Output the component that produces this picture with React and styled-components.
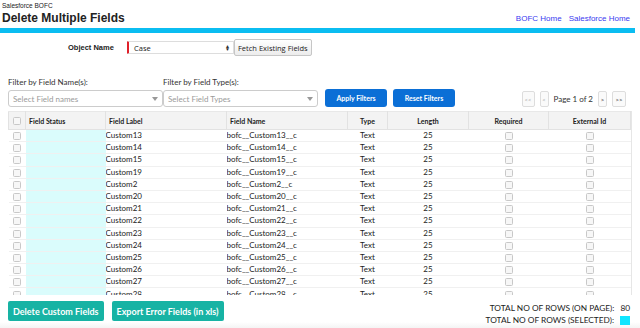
import React from 'react'
import styled, { createGlobalStyle } from 'styled-components'

const Global = createGlobalStyle`
  body {
    margin: 0;
    background: #fff;
    font-family: Lato, "Open Sans", sans-serif;
    color: #222;
  }
`

const Page = styled.div`
  width: 640px;
  height: 328px;
  overflow: hidden;
  background: linear-gradient(to bottom, #fff 0, #fff 322px, #f4f4f4 328px);
`

const Top = styled.div`
  padding: 2px 10px 0 2px;
  font-family: "Liberation Sans", Arial, sans-serif;
`

const Org = styled.div`
  font-size: 6.5px;
  height: 8px;
`

const TitleRow = styled.div`
  display: flex;
  justify-content: space-between;
  align-items: center;
  height: 16px;
`

const Title = styled.h1`
  margin: 0;
  font-size: 12px;
  font-weight: bold;
`

const Links = styled.div`
  display: flex;
  gap: 7px;
  font-size: 8px;
  a { color: #3a3af0; text-decoration: none; }
`

const Bar = styled.div`
  height: 5px;
  width: 635px;
  margin-top: 2px;
  background: #0bbdf1;
`

const ObjectRow = styled.div`
  display: flex;
  align-items: center;
  margin: 6px 0 0 68px;
  height: 17px;
`

const ObjLabel = styled.span`
  font-family: "Liberation Sans", Arial, sans-serif;
  font-size: 7.5px;
  font-weight: bold;
  width: 59px;
`

const NativeSelect = styled.div`
  width: 107px;
  height: 13px;
  border: 1px solid #ddd;
  border-left: 2px solid #e0202a;
  display: flex;
  align-items: center;
  justify-content: space-between;
  padding: 0 3px 0 5px;
  box-sizing: border-box;
  font-size: 7.5px;
  font-family: "Open Sans", sans-serif;
  border-radius: 1px;
`

const Arrows = styled.span`
  font-size: 5px;
  line-height: 3px;
  display: flex;
  flex-direction: column;
  color: #333;
`

const GreyButton = styled.button`
  height: 17px;
  padding: 0 3px;
  font-size: 7.5px;
  font-family: "Open Sans", sans-serif;
  border: 1px solid #c6c6c6;
  border-radius: 2px;
  background: linear-gradient(#fff, #ececec);
  color: #222;
`

const FilterRow = styled.div`
  display: flex;
  align-items: flex-end;
  margin: 22px 0 0 8px;
  height: 29px;
`

const FilterField = styled.div`
  display: flex;
  flex-direction: column;
  width: 155px;
`

const FilterLabel = styled.label`
  font-size: 8px;
  color: #333;
  margin-bottom: 3px;
`

const FilterSelect = styled.div`
  height: 17px;
  border: 1px solid #ccc;
  border-radius: 3px;
  box-sizing: border-box;
  display: flex;
  align-items: center;
  justify-content: space-between;
  padding: 0 4px;
  color: #9a9a9a;
  font-size: 8px;
  &::after {
    content: "";
    border-left: 3.5px solid transparent;
    border-right: 3.5px solid transparent;
    border-top: 4px solid #999;
  }
`

const BlueButton = styled.button`
  height: 18px;
  width: 62px;
  margin-left: ${p => p.$gap}px;
  border: none;
  border-radius: 3px;
  background: #0b6fd6;
  color: #fff;
  font-family: Lato, sans-serif;
  font-weight: bold;
  font-size: 7px;
`

const Pager = styled.div`
  margin-left: auto;
  margin-right: 14px;
  display: flex;
  align-items: center;
  gap: 5px;
  font-size: 8px;
  color: #333;
`

const PageBtn = styled.span`
  height: 16px;
  width: ${p => p.$w}px;
  border: 1px solid #ddd;
  border-radius: 2px;
  box-sizing: border-box;
  display: flex;
  align-items: center;
  justify-content: center;
  font-size: 6px;
  color: ${p => (p.$on ? '#333' : '#aaa')};
  background: #fafafa;
`

const TableBox = styled.div`
  margin: 4px 0 0 8px;
  width: 623px;
  height: 184px;
  overflow: hidden;
  border-right: 1px solid #e6e6e6;
`

const Table = styled.table`
  border-collapse: collapse;
  width: 622px;
  table-layout: fixed;
  font-size: 8px;
`

const Th = styled.th`
  height: 17px;
  background: #f3f3f3;
  border: 1px solid #e2e2e2;
  border-top: 1px solid #e8e8e8;
  font-size: 7px;
  font-weight: bold;
  text-align: ${p => p.$align || 'left'};
  padding: 0 0 0 ${p => p.$pl ?? 3}px;
  color: #222;
`

const Tr = styled.tr`
  height: 12.2px;
  border-bottom: 1px solid #f0f0f0;
`

const Td = styled.td`
  padding: 0;
  text-align: ${p => p.$align || 'left'};
  line-height: 11px;
  background: ${p => (p.$status ? '#dafcfc' : 'transparent')};
  overflow: hidden;
  white-space: nowrap;
`

const Box = styled.span`
  display: inline-block;
  width: 6px;
  height: 6px;
  border: 1px solid #c8c8c8;
  border-radius: 1.5px;
  background: #f7f7f7;
  vertical-align: middle;
`

const Footer = styled.div`
  display: flex;
  justify-content: space-between;
  margin: 6px 0 0 8px;
  padding-right: 10px;
`

const Actions = styled.div`
  display: flex;
  gap: 8px;
`

const TealButton = styled.button`
  height: 20px;
  padding: 0 5px;
  border: none;
  border-radius: 2px;
  background: #17b3a4;
  color: #fff;
  font-family: Lato, sans-serif;
  font-weight: bold;
  font-size: 9px;
`

const Totals = styled.div`
  display: flex;
  flex-direction: column;
  align-items: flex-end;
  gap: 2px;
  margin-top: 2px;
  font-size: 8.3px;
  color: #222;
`

const TotalLine = styled.div`
  display: flex;
  align-items: center;
  gap: 6px;
  height: 10px;
`

const Swatch = styled.span`
  display: inline-block;
  width: 10px;
  height: 9px;
  background: #10e6ff;
`

const rows = ['13', '14', '15', '19', '2', '20', '21', '22', '23', '24', '25', '26', '27', '28', '29']

export default function App() {
  return (
    <Page>
      <Global />
      <Top>
        <Org>Salesforce BOFC</Org>
        <TitleRow>
          <Title>Delete Multiple Fields</Title>
          <Links>
            <a href="#">BOFC Home</a>
            <a href="#">Salesforce Home</a>
          </Links>
        </TitleRow>
      </Top>
      <Bar />
      <ObjectRow>
        <ObjLabel>Object Name</ObjLabel>
        <NativeSelect>
          Case
          <Arrows><span>▲</span><span>▼</span></Arrows>
        </NativeSelect>
        <GreyButton>Fetch Existing Fields</GreyButton>
      </ObjectRow>
      <FilterRow>
        <FilterField>
          <FilterLabel>Filter by Field Name(s):</FilterLabel>
          <FilterSelect>Select Field names</FilterSelect>
        </FilterField>
        <FilterField>
          <FilterLabel>Filter by Field Type(s):</FilterLabel>
          <FilterSelect>Select Field Types</FilterSelect>
        </FilterField>
        <BlueButton $gap={7}>Apply Filters</BlueButton>
        <BlueButton $gap={6}>Reset Filters</BlueButton>
        <Pager>
          <PageBtn $w={13}>&lt;&lt;</PageBtn>
          <PageBtn $w={9}>&lt;</PageBtn>
          <span>Page 1 of 2</span>
          <PageBtn $w={9} $on>&gt;</PageBtn>
          <PageBtn $w={14} $on>&gt;&gt;</PageBtn>
        </Pager>
      </FilterRow>
      <TableBox>
        <Table>
          <colgroup>
            <col style={{ width: 17 }} />
            <col style={{ width: 80 }} />
            <col style={{ width: 121 }} />
            <col style={{ width: 121 }} />
            <col style={{ width: 40 }} />
            <col style={{ width: 81 }} />
            <col style={{ width: 80 }} />
            <col style={{ width: 82 }} />
          </colgroup>
          <thead>
            <tr>
              <Th $align="center" $pl={0}><Box /></Th>
              <Th>Field Status</Th>
              <Th>Field Label</Th>
              <Th>Field Name</Th>
              <Th $align="center" $pl={0}>Type</Th>
              <Th $align="center" $pl={0}>Length</Th>
              <Th $align="center" $pl={0}>Required</Th>
              <Th $align="center" $pl={0}>External Id</Th>
            </tr>
          </thead>
          <tbody>
            {rows.map(n => (
              <Tr key={n}>
                <Td $align="center"><Box /></Td>
                <Td $status />
                <Td>Custom{n}</Td>
                <Td>bofc__Custom{n}__c</Td>
                <Td $align="center">Text</Td>
                <Td $align="center">25</Td>
                <Td $align="center"><Box /></Td>
                <Td $align="center"><Box /></Td>
              </Tr>
            ))}
          </tbody>
        </Table>
      </TableBox>
      <Footer>
        <Actions>
          <TealButton>Delete Custom Fields</TealButton>
          <TealButton>Export Error Fields (in xls)</TealButton>
        </Actions>
        <Totals>
          <TotalLine>TOTAL NO OF ROWS (ON PAGE):<span>80</span></TotalLine>
          <TotalLine>TOTAL NO OF ROWS (SELECTED):<Swatch /></TotalLine>
        </Totals>
      </Footer>
    </Page>
  )
}
